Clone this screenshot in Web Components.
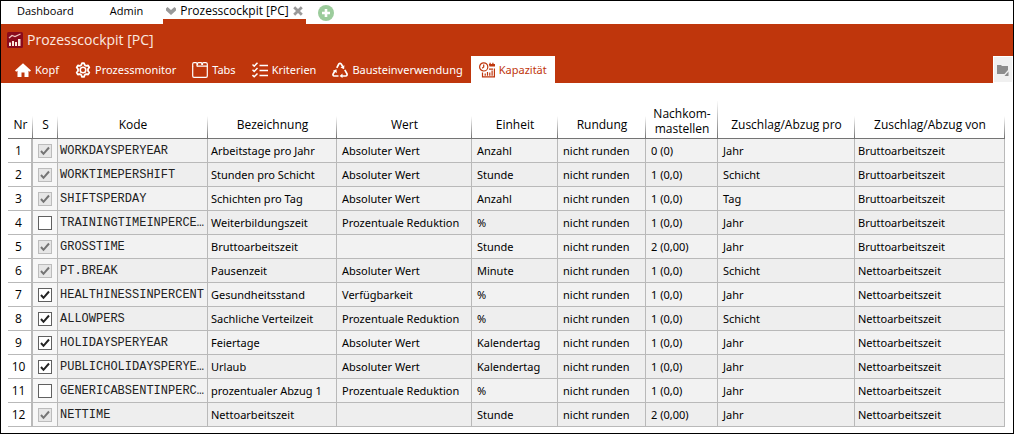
<!DOCTYPE html>
<html lang="de">
<head>
<meta charset="utf-8">
<title>Prozesscockpit [PC]</title>
<style>
  html, body { margin: 0; }
  body { font: 11px/16px "Noto Sans", "Open Sans", sans-serif; color: #000; background: #fff; }
</style>
</head>
<body>
<cockpit-app></cockpit-app>

<template id="app-template">
  <style>
    :host { display: flex; flex-direction: column; box-sizing: border-box; min-height: 100vh; border: 1px solid #000; background: #fff; --accent: #bf360c; }
    main { padding: 18px 8px 6px 7px; }
  </style>
  <window-tabs></window-tabs>
  <module-header heading="Prozesscockpit [PC]">
    <nav-tab label="Kopf"><svg viewBox="0 0 16 16" width="16" height="16"><path fill="currentColor" d="M8 1.200 0 8.600l1.200 1.200L2.500 8.700V15h4v-4.500h3V15h4V8.700l1.300 1.100L16 8.600z"/></svg></nav-tab>
    <nav-tab label="Prozessmonitor"><svg viewBox="0 0 16 16" width="16" height="16" fill="none" stroke="currentColor"><path stroke-width="1.800" stroke-linejoin="round" d="M6.300 3 7 1.200h2L9.700 3l1.500.9 1.900-.4 1.200 2L13 7v2l1.300 1.500-1.200 2-1.900-.4-1.500.9-.7 1.800H7L6.300 13l-1.500-.9-1.900.4-1.200-2L3 9V7L1.700 5.500l1.200-2 1.900.4z"/><circle cx="8" cy="8" r="2.800" stroke-width="1.600"/></svg></nav-tab>
    <nav-tab label="Tabs"><svg viewBox="0 0 16 16" width="16" height="16" fill="none" stroke="currentColor" stroke-width="1.200"><path d="M.7 4.500V2q0-1.300 1.300-1.300h2q1 0 1 1.300v2.500M5.500 3V1.500Q5.500.700 6.500.700h2.300q1 0 1 .8V3M10.500 3V1.500q0-.8 1-.8h2.200q1.600 0 1.600 1.300v2.500"/><path d="M.7 4v10q0 1.300 1.300 1.300h12q1.300 0 1.300-1.300V4M5 4.200h10.300"/></svg></nav-tab>
    <nav-tab label="Kriterien"><svg viewBox="0 0 16 16" width="16" height="16" fill="none" stroke="currentColor"><path stroke-width="1.500" d="m.5 2.500 1.700 1.700L5.500.8M.5 7.800l1.700 1.700 3.300-3.400M.5 13.100l1.700 1.700 3.300-3.400M7.500 3.500H16M7.500 8.500H16M7.500 13.500H16"/></svg></nav-tab>
    <nav-tab label="Bausteinverwendung"><svg viewBox="0 0 16 16" width="16" height="16" fill="none" stroke="currentColor" stroke-width="1.700"><path d="m4.800 5.800 2-3.800q1.200-1.500 2.400 0l1.800 3M12.800 7.800l2.200 4q.4 1.900-1.200 2.200H9.500M6.500 14H2.200Q.600 13.700 1.100 12L2.800 9"/><path fill="currentColor" stroke="none" d="m12.400 3.300-.3 4-3.600-1.800zM10.500 11.600V16L7.600 13.900zM.9 8.800l3.600-1.600.3 3.700z"/></svg></nav-tab>
    <nav-tab label="Kapazität" active><svg viewBox="0 0 16 16" width="16" height="16" fill="none" stroke="currentColor"><path fill="currentColor" stroke="none" d="M9.800 2h.7V.8h1.200V2h1.600V.8h1.200V2H16v2.500h-5.500z"/><circle cx="4.700" cy="4.900" r="4.100" stroke-width="1.200"/><path stroke-width="1.200" d="M4.700 2.500V5L3.200 6.300M3.500 10.500v4.300h11.900V6.500"/><path stroke-width="1.200" d="M6.200 11.500v2.200M8.500 10v3.700M10.800 10.500v3.200M13.100 8.500v5.200M10 7.200h4"/></svg></nav-tab>
  </module-header>
  <main><capacity-table></capacity-table></main>
</template>

<template id="window-tabs-template">
  <style>
    :host { display: block; font-family: "Open Sans", "Noto Sans", sans-serif; font-size: 12px; }
    nav { display: flex; height: 23px; align-items: stretch; }
    a { color: inherit; text-decoration: none; }
    nav > a { padding: 2px 16px 0; font-size: 11px; }
    nav > a + a { padding: 2px 20px 0; }
    .current { display: flex; box-sizing: border-box; align-items: flex-start; gap: 4px; padding: 2px 3px 0; border-bottom: 5px solid var(--accent); }
    svg { display: block; }
    button { display: block; border: 0; padding: 0; background: none; font: inherit; }
    .close { padding-top: 3px; }
    .chevron { padding-top: 4px; }
    .add { margin: 4px 0 0 12px; height: 16px; }
  </style>
  <nav aria-label="Fenster">
    <a href="#dashboard">Dashboard</a><a href="#admin">Admin</a>
    <div class="current">
      <button class="chevron" aria-label="Menü"><svg width="10" height="8" viewBox="0 0 10 8"><path d="M0 1.500 1.500 0 5 3 8.500 0 10 1.500V3.500L5 8 0 3.500z" fill="#999"/></svg></button>
      <a href="#pc" aria-current="page">Prozesscockpit [PC]</a>
      <button class="close" aria-label="Schließen"><svg width="10" height="10" viewBox="0 0 10 10"><path d="m1.200 1.200 7.600 7.600m0-7.600L1.200 8.800" stroke="#999" stroke-width="2.800"/></svg></button>
    </div>
    <button class="add" aria-label="Neuer Tab"><svg width="16" height="16" viewBox="0 0 16 16"><circle cx="8" cy="8" r="8" fill="#9ccc9c"/><path d="M8 4v8M4 8h8" stroke="#fff" stroke-width="2.600"/></svg></button>
  </nav>
</template>

<template id="module-header-template">
  <style>
    :host { display: block; background: var(--accent); color: #fff; }
    .title { display: flex; align-items: center; gap: 4px; height: 32px; padding: 0 6px; }
    h1 { margin: 0; font: 400 14px/20px "Open Sans", "Noto Sans", sans-serif; color: #fbe9e0; }
    nav { display: flex; height: 27px; padding-left: 6px; }
    .folder { margin-left: auto; width: 20px; border: 1px solid #fff; padding: 0 0 0 3px; background: #f0f0f0; }
    svg { display: block; }
  </style>
  <div class="title">
    <svg width="16" height="16" viewBox="0 0 16 16"><rect width="16" height="16" rx="1.500" fill="#8a0a1c"/><path d="m2 6 3-2.500 3 1L13.500 2" fill="none" stroke="#efc7c0" stroke-width="1.300"/><path d="M2 10.500h2V14H2zm3-1.500h2v5H5zm3 1h2v4H8zm3-3h2.500v7H11z" fill="#fbe9e0"/></svg>
    <h1></h1>
  </div>
  <nav aria-label="Bereiche"><slot></slot>
    <button class="folder" aria-label="Ordner"><svg width="12" height="12" viewBox="0 0 12 12"><path d="M0 1h4l1 1h6v4l-3.500 4H0z" fill="#8c8c8c"/><path d="M11.500 7.500V12H7.500z" fill="#8c8c8c"/></svg></button>
  </nav>
</template>

<template id="nav-tab-template">
  <style>
    :host { display: block; }
    a { display: flex; box-sizing: border-box; height: 27px; align-items: center; gap: 4px; padding: 0 8px; color: #fff; text-decoration: none; white-space: nowrap; }
    :host([active]) a { background: #fff; color: var(--accent); }
  </style>
  <a href="#"><slot></slot><span></span></a>
</template>

<template id="capacity-table-template">
  <style>
    :host { display: block; }
    table { width: 100%; table-layout: fixed; border-collapse: separate; border-spacing: 0; }
    th, td { box-sizing: border-box; padding: 0 3px; font-weight: 400; white-space: nowrap; overflow: hidden; }
    th { font-family: "Open Sans", "Noto Sans", sans-serif; font-size: 12px; }
    thead th { height: 38px; padding: 0 0 6px; line-height: 15px; vertical-align: bottom; border-bottom: 1px solid #747474; background: linear-gradient(#fff, #747474) right bottom / 1px 22px no-repeat; }
    thead th.tall { padding-bottom: 2px; white-space: pre-line; background-size: 1px 38px; }
    tbody th, td { height: 24px; border: solid #b9b9b9; border-width: 0 1px 1px 0; }
    tbody th { border-right-width: 2px; padding: 0 2px 0 0; text-align: center; }
    td { background: #f2f2f2; }
    tr:nth-child(even) td { background: #eee; }
    tbody tr td.check { background: #f7f7f7; padding: 0 0 0 5px; }
    td.wide { padding-left: 5px; }
    td.code { font-family: "Liberation Mono", monospace; font-size: 12px; padding: 0 0 0 2px; color: #222; }
    input { display: block; appearance: none; box-sizing: border-box; width: 14px; height: 14px; margin: 0; border: 1px solid #606060; background: #fff center / 12px 12px no-repeat; }
    input:checked { background-image: url("data:image/svg+xml,%3Csvg xmlns='http://www.w3.org/2000/svg' viewBox='0 0 12 12'%3E%3Cpath d='M2 6 4.500 8.800 10 2.500' fill='none' stroke='%23222' stroke-width='2'/%3E%3C/svg%3E"); }
    input:disabled { border-color: #bcbcbc; background-color: #e6e6e6; background-image: url("data:image/svg+xml,%3Csvg xmlns='http://www.w3.org/2000/svg' viewBox='0 0 12 12'%3E%3Cpath d='M2 6 4.500 8.800 10 2.500' fill='none' stroke='%23747474' stroke-width='2'/%3E%3C/svg%3E"); }
  </style>
  <table>
    <colgroup></colgroup>
    <thead><tr></tr></thead>
    <tbody></tbody>
  </table>
</template>

<script>
  const stamp = (host, id) => {
    const root = host.attachShadow({ mode: "open" });
    root.append(document.getElementById(id).content.cloneNode(true));
    return root;
  };

  customElements.define("nav-tab", class extends HTMLElement {
    constructor() { super(); stamp(this, "nav-tab-template"); }
    connectedCallback() { this.shadowRoot.querySelector("span").textContent = this.getAttribute("label"); }
  });

  customElements.define("window-tabs", class extends HTMLElement {
    constructor() { super(); stamp(this, "window-tabs-template"); }
  });

  customElements.define("module-header", class extends HTMLElement {
    constructor() { super(); stamp(this, "module-header-template"); }
    connectedCallback() { this.shadowRoot.querySelector("h1").textContent = this.getAttribute("heading"); }
  });

  const columns = [
    ["Nr", 25], ["S", 25], ["Kode", 150], ["Bezeichnung", 129], ["Wert", 135], ["Einheit", 86],
    ["Rundung", 88], ["Nachkom-\nmastellen", 72], ["Zuschlag/Abzug pro", 137], ["Zuschlag/Abzug von", 150]
  ];
  // Status column: "on" / "off" can be changed, "fixed" is ticked and locked.
  const rows = [
    ["fixed", "WORKDAYSPERYEAR", "Arbeitstage pro Jahr", "Absoluter Wert", "Anzahl", "0 (0)", "Jahr", "Bruttoarbeitszeit"],
    ["fixed", "WORKTIMEPERSHIFT", "Stunden pro Schicht", "Absoluter Wert", "Stunde", "1 (0,0)", "Schicht", "Bruttoarbeitszeit"],
    ["fixed", "SHIFTSPERDAY", "Schichten pro Tag", "Absoluter Wert", "Anzahl", "1 (0,0)", "Tag", "Bruttoarbeitszeit"],
    ["off", "TRAININGTIMEINPERCE…", "Weiterbildungszeit", "Prozentuale Reduktion", "%", "1 (0,0)", "Jahr", "Bruttoarbeitszeit"],
    ["fixed", "GROSSTIME", "Bruttoarbeitszeit", "", "Stunde", "2 (0,00)", "Jahr", "Bruttoarbeitszeit"],
    ["fixed", "PT.BREAK", "Pausenzeit", "Absoluter Wert", "Minute", "1 (0,0)", "Schicht", "Nettoarbeitszeit"],
    ["on", "HEALTHINESSINPERCENT", "Gesundheitsstand", "Verfügbarkeit", "%", "1 (0,0)", "Jahr", "Nettoarbeitszeit"],
    ["on", "ALLOWPERS", "Sachliche Verteilzeit", "Prozentuale Reduktion", "%", "1 (0,0)", "Schicht", "Nettoarbeitszeit"],
    ["on", "HOLIDAYSPERYEAR", "Feiertage", "Absoluter Wert", "Kalendertag", "1 (0,0)", "Jahr", "Nettoarbeitszeit"],
    ["on", "PUBLICHOLIDAYSPERYE…", "Urlaub", "Absoluter Wert", "Kalendertag", "1 (0,0)", "Jahr", "Nettoarbeitszeit"],
    ["off", "GENERICABSENTINPERC…", "prozentualer Abzug 1", "Prozentuale Reduktion", "%", "1 (0,0)", "Jahr", "Nettoarbeitszeit"],
    ["fixed", "NETTIME", "Nettoarbeitszeit", "", "Stunde", "2 (0,00)", "Jahr", "Nettoarbeitszeit"]
  ];

  customElements.define("capacity-table", class extends HTMLElement {
    constructor() {
      super();
      const root = stamp(this, "capacity-table-template");
      const make = (tag, parent, text = "", cls = "") => {
        const el = document.createElement(tag);
        el.textContent = text;
        if (cls) el.className = cls;
        parent.append(el);
        return el;
      };
      for (const [name, width] of columns) {
        make("col", root.querySelector("colgroup")).style.width = width + "px";
        make("th", root.querySelector("thead tr"), name, name.includes("\n") ? "tall" : "").scope = "col";
      }
      rows.forEach(([state, code, name, value, unit, digits, per, of], i) => {
        const tr = make("tr", root.querySelector("tbody"));
        make("th", tr, i + 1).scope = "row";
        const box = make("input", make("td", tr, "", "check"));
        box.type = "checkbox";
        box.checked = state !== "off";
        box.disabled = state === "fixed";
        box.setAttribute("aria-label", code);
        make("td", tr, code, "code");
        make("td", tr, name);
        for (const text of [value, unit, "nicht runden", digits, per]) make("td", tr, text, "wide");
        make("td", tr, of);
      });
    }
  });

  customElements.define("cockpit-app", class extends HTMLElement {
    constructor() { super(); stamp(this, "app-template"); }
  });
</script>
</body>
</html>
